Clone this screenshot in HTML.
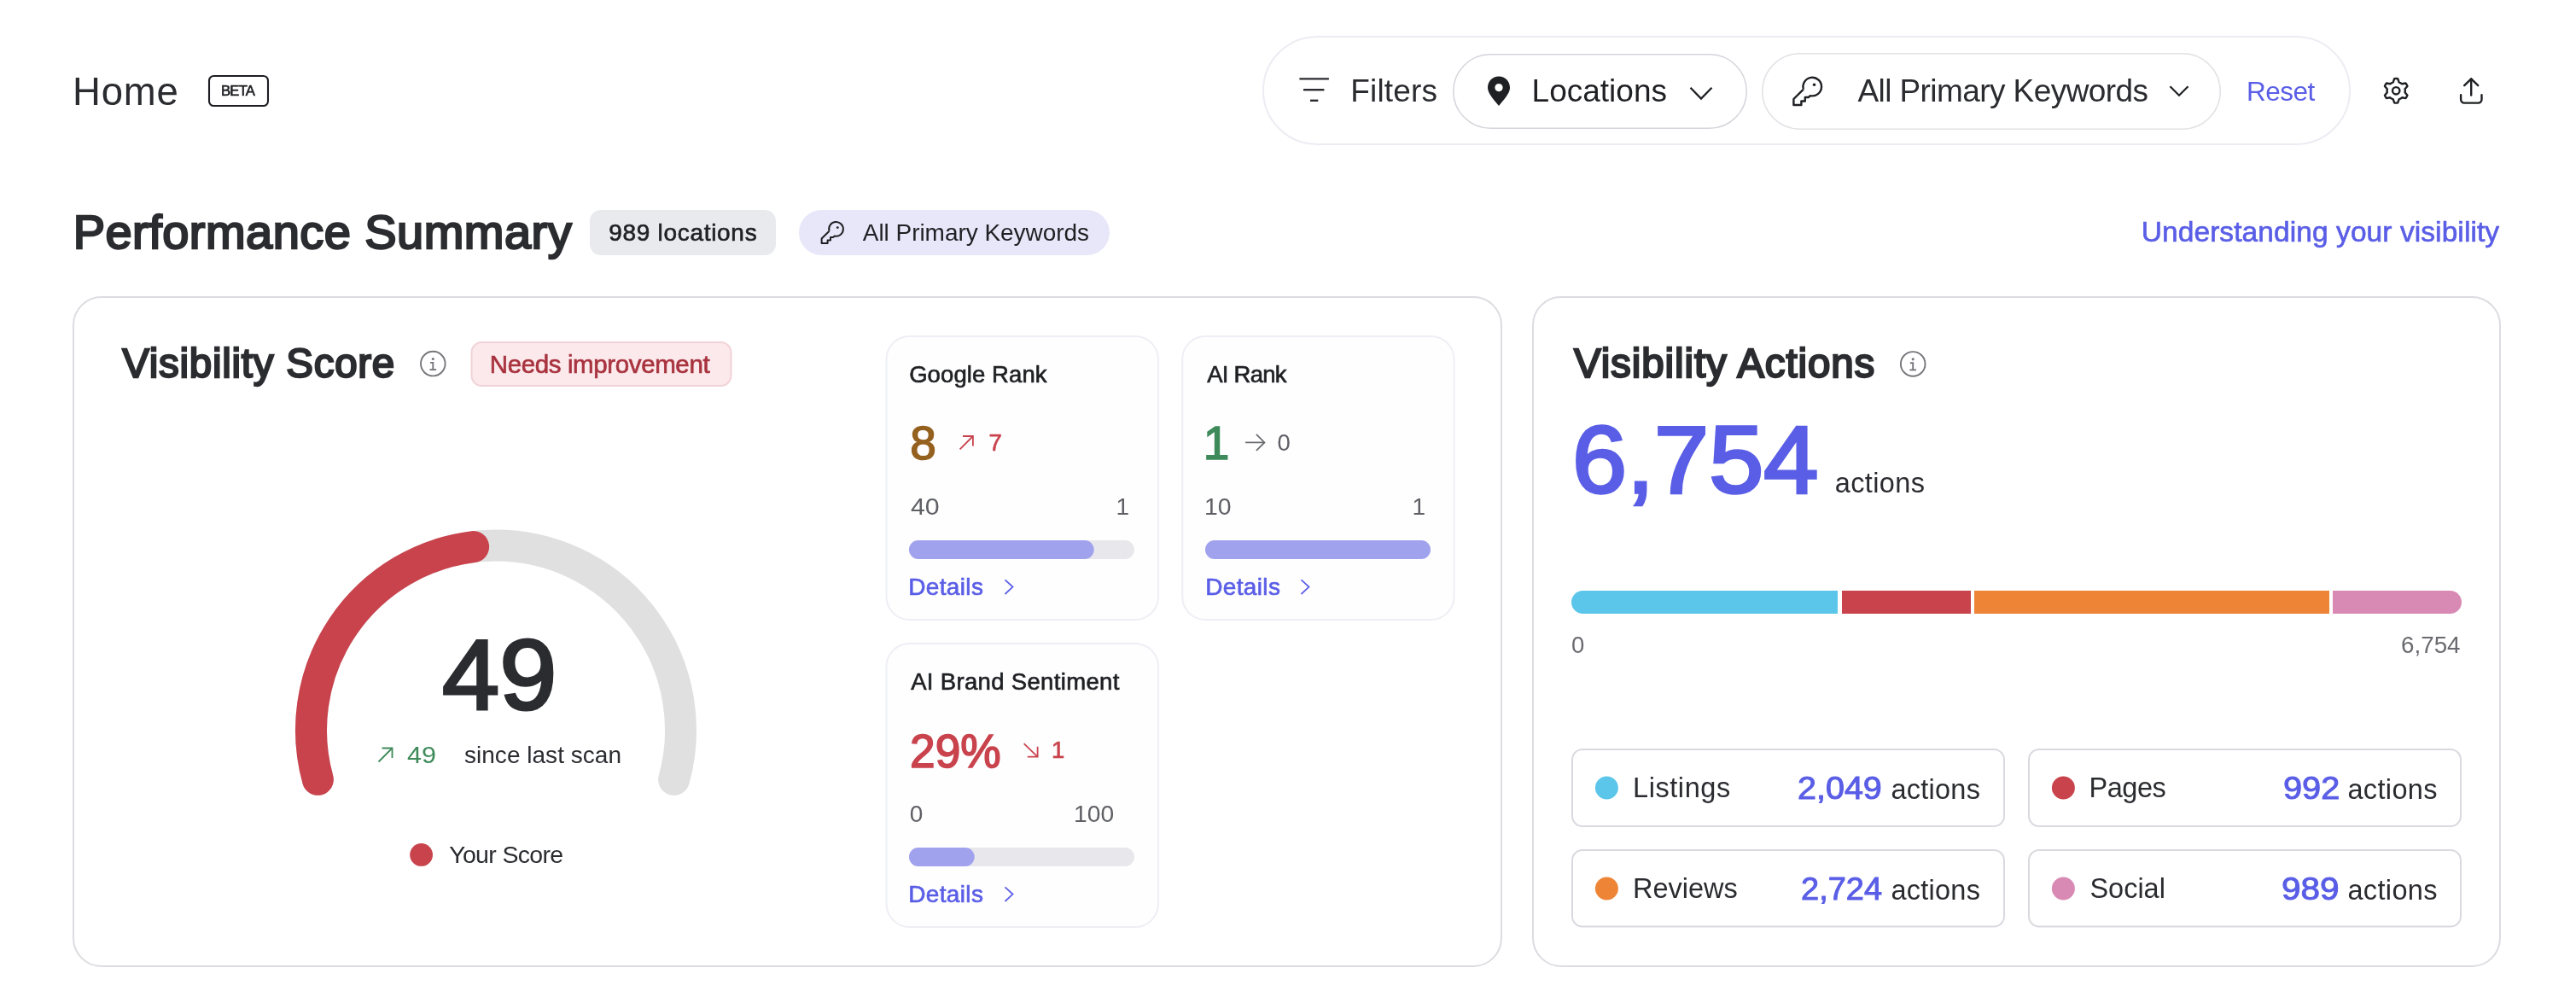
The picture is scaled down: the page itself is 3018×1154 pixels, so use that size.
<!DOCTYPE html>
<html><head><meta charset="utf-8"><title>Home</title>
<style>
html,body{margin:0;padding:0;background:#fff;}
body{width:3018px;height:1154px;position:relative;overflow:hidden;font-family:"Liberation Sans",sans-serif;}
svg{position:absolute;left:0;top:0;}
#root{position:absolute;left:0;top:0;width:3018px;height:1154px;}
.t{position:absolute;white-space:nowrap;line-height:1;transform-origin:0 0;}
#tx{position:absolute;left:0;top:0;width:3018px;height:1154px;will-change:transform;}
</style></head><body>
<div id="root">
<svg width="3018" height="1154" viewBox="0 0 3018 1154">
<rect x="1480" y="43" width="1273" height="126" rx="63" fill="none" stroke="#ececf3" stroke-width="2"/>
<rect x="1702.75" y="63.75" width="343.5" height="86.5" rx="43.25" fill="#fff" stroke="#d4d5da" stroke-width="1.5"/>
<rect x="2064.75" y="62.75" width="536.5" height="88.5" rx="44.25" fill="#fff" stroke="#e2e2e6" stroke-width="1.5"/>
<rect x="245" y="89" width="69" height="35" rx="5.5" fill="none" stroke="#1d1e21" stroke-width="2.1"/>
<g stroke="#2b2c30" stroke-width="2.4" stroke-linecap="butt"><line x1="1522.4" y1="92.4" x2="1556.9" y2="92.4"/><line x1="1527" y1="105.2" x2="1551.4" y2="105.2"/><line x1="1535" y1="117.8" x2="1544.3" y2="117.8"/></g>
<path d="M1756,89.5 C1748.5,89.5 1743,95.2 1743,102.6 C1743,108 1746.5,113 1756,124 C1765.5,113 1769,108 1769,102.6 C1769,95.2 1763.5,89.5 1756,89.5 Z M1756,98 a4.6,4.6 0 1,0 0.01,0 Z" fill="#1f2023" fill-rule="evenodd"/>
<polyline points="1980.5,102.8 1993,115.6 2005.5,102.8" fill="none" stroke="#1f2023" stroke-width="2.3"/>
<polyline points="2542.5,101.2 2553,111.7 2563.5,101.2" fill="none" stroke="#1f2023" stroke-width="2.2"/>
<path d="M2112.90,104.60 L2101.40,116.00 L2101.40,123.00 L2110.40,123.00 L2110.40,118.50 L2114.80,118.50 L2114.80,114.00 L2118.70,114.00 L2121.00,112.10 A10.80,10.80 0 1,0 2112.90,104.60" fill="none" stroke="#1f2023" stroke-width="2.4" stroke-linejoin="round"/>
<circle cx="2125.50" cy="99.30" r="1.80" fill="#1f2023"/>
<path d="M2805.21,92.14 A14.3,14.3 0 0 1 2809.19,92.14 L2810.65,96.28 A10.6,10.6 0 0 1 2814.15,98.30 L2818.47,97.50 A14.3,14.3 0 0 1 2820.46,100.94 L2817.61,104.28 A10.6,10.6 0 0 1 2817.61,108.32 L2820.46,111.66 A14.3,14.3 0 0 1 2818.47,115.10 L2814.15,114.30 A10.6,10.6 0 0 1 2810.65,116.32 L2809.19,120.46 A14.3,14.3 0 0 1 2805.21,120.46 L2803.75,116.32 A10.6,10.6 0 0 1 2800.25,114.30 L2795.93,115.10 A14.3,14.3 0 0 1 2793.94,111.66 L2796.79,108.32 A10.6,10.6 0 0 1 2796.79,104.28 L2793.94,100.94 A14.3,14.3 0 0 1 2795.93,97.50 L2800.25,98.30 A10.6,10.6 0 0 1 2803.75,96.28 Z" fill="none" stroke="#1f2023" stroke-width="2.4" stroke-linejoin="round"/>
<circle cx="2807.2" cy="106.3" r="4.2" fill="none" stroke="#1f2023" stroke-width="2.4"/>
<g fill="none" stroke="#1f2023" stroke-width="2.4" stroke-linecap="round" stroke-linejoin="round"><polyline points="2887.2,100.2 2895.2,92.3 2903.2,100.2"/><line x1="2895.2" y1="92.6" x2="2895.2" y2="111.6"/><path d="M2883.1,111.2 V116.6 a4,4 0 0 0 4,4 H2903.5 a4,4 0 0 0 4,-4 V111.2"/></g>
<rect x="691" y="246" width="218" height="53" rx="13" fill="#e9eaee"/>
<rect x="936" y="246" width="364" height="53" rx="26.5" fill="#e7e7f9"/>
<path d="M971.53,270.70 L962.62,279.54 L962.62,284.96 L969.59,284.96 L969.59,281.47 L973.00,281.47 L973.00,277.99 L976.03,277.99 L977.81,276.51 A8.37,8.37 0 1,0 971.53,270.70" fill="none" stroke="#1f2023" stroke-width="2.0" stroke-linejoin="round"/>
<circle cx="981.30" cy="266.59" r="1.40" fill="#1f2023"/>
<rect x="86" y="348" width="1673" height="784" rx="33" fill="#fff" stroke="#dcdce1" stroke-width="2"/>
<rect x="1796" y="348" width="1133" height="784" rx="33" fill="#fff" stroke="#dcdce1" stroke-width="2"/>
<g fill="none" stroke="#76777b" stroke-width="1.9"><circle cx="507.3" cy="426.1" r="14.3"/><polyline points="504.0,424.90000000000003 507.3,424.90000000000003 507.3,433.1"/><line x1="503.5" y1="433.1" x2="511.1" y2="433.1"/></g><circle cx="507.3" cy="420.5" r="1.6" fill="#76777b"/>
<g fill="none" stroke="#76777b" stroke-width="1.9"><circle cx="2241.2" cy="426.4" r="14.3"/><polyline points="2237.8999999999996,425.2 2241.2,425.2 2241.2,433.4"/><line x1="2237.3999999999996" y1="433.4" x2="2245.0" y2="433.4"/></g><circle cx="2241.2" cy="420.79999999999995" r="1.6" fill="#76777b"/>
<rect x="552.5" y="401" width="304" height="51" rx="12" fill="#fbe9eb" stroke="#f1d3d7" stroke-width="2"/>
<path d="M372.37,913.36 A216.5,216.5 0 1 1 789.63,913.36" fill="none" stroke="#e0e0e0" stroke-width="37" stroke-linecap="round"/>
<path d="M372.37,913.36 A216.5,216.5 0 0 1 554.62,640.61" fill="none" stroke="#c9434d" stroke-width="37" stroke-linecap="round"/>
<g fill="none" stroke="#3e8a5a" stroke-width="1.8"><line x1="443.5" y1="892.5" x2="459.5" y2="876.5"/><polyline points="447.6,876.5 459.5,876.5 459.5,888.1"/></g>
<circle cx="493.6" cy="1001.4" r="13.4" fill="#c9434d"/>
<rect x="1038.5" y="394" width="318.5" height="332" rx="27" fill="#fefeff" stroke="#eeeff4" stroke-width="2"/>
<rect x="1385.2" y="394" width="318.3" height="332" rx="27" fill="#fefeff" stroke="#eeeff4" stroke-width="2"/>
<rect x="1038.5" y="754" width="318.5" height="332" rx="27" fill="#fefeff" stroke="#eeeff4" stroke-width="2"/>
<g fill="none" stroke="#c9434d" stroke-width="1.8"><line x1="1124.6" y1="526.3" x2="1139.9" y2="511"/><polyline points="1128.0,511 1139.9,511 1139.9,522.6"/></g>
<g fill="none" stroke="#68696e" stroke-width="1.7"><line x1="1459.1" y1="518.4" x2="1481.2" y2="518.4"/><polyline points="1471.9,508.9 1481.5,518.4 1471.9,527.9"/></g>
<g fill="none" stroke="#c9434d" stroke-width="1.8"><line x1="1199.6" y1="871.2" x2="1215.6" y2="886.6"/><polyline points="1203.8,886.6 1215.6,886.6 1215.6,874.8"/></g>
<rect x="1065" y="633" width="264" height="22" rx="11.0" fill="#e8e8ec"/>
<rect x="1065" y="633" width="216.7" height="22" rx="11.0" fill="#a0a2ee"/>
<rect x="1412" y="633" width="264" height="22" rx="11.0" fill="#e8e8ec"/>
<rect x="1412" y="633" width="264" height="22" rx="11.0" fill="#a0a2ee"/>
<rect x="1065" y="993" width="264" height="22" rx="11.0" fill="#e8e8ec"/>
<rect x="1065" y="993" width="76.7" height="22" rx="11.0" fill="#a0a2ee"/>
<polyline points="1177.5,679.3 1186.5,687.5999999999999 1177.5,696.0" fill="none" stroke="#5a5ee6" stroke-width="1.8"/>
<polyline points="1524.5,679.3 1533.5,687.5999999999999 1524.5,696.0" fill="none" stroke="#5a5ee6" stroke-width="1.8"/>
<polyline points="1177.5,1039.3 1186.5,1047.6 1177.5,1056.0" fill="none" stroke="#5a5ee6" stroke-width="1.8"/>
<clipPath id="sb"><rect x="1841" y="692" width="1043" height="27" rx="13.5"/></clipPath>
<g clip-path="url(#sb)"><rect x="1841" y="692" width="312" height="27" fill="#5cc6ea"/><rect x="2158" y="692" width="151" height="27" fill="#c9434d"/><rect x="2313" y="692" width="416" height="27" fill="#ee8436"/><rect x="2733" y="692" width="151" height="27" fill="#d98ab4"/></g>
<rect x="1842" y="878" width="506" height="90" rx="12" fill="#fff" stroke="#d9dadf" stroke-width="2"/>
<circle cx="1882.4" cy="923" r="13.5" fill="#5cc6ea"/>
<rect x="2377" y="878" width="506" height="90" rx="12" fill="#fff" stroke="#d9dadf" stroke-width="2"/>
<circle cx="2417.4" cy="923" r="13.5" fill="#c9434d"/>
<rect x="1842" y="996" width="506" height="89.5" rx="12" fill="#fff" stroke="#d9dadf" stroke-width="2"/>
<circle cx="1882.4" cy="1041" r="13.5" fill="#ee8436"/>
<rect x="2377" y="996" width="506" height="89.5" rx="12" fill="#fff" stroke="#d9dadf" stroke-width="2"/>
<circle cx="2417.4" cy="1041" r="13.5" fill="#d98ab4"/>
</svg>
<div id="tx">
<div class="t" id="t0" style="left:85.00px;top:85.01px;font-size:45.5px;color:#2b2c30;letter-spacing:0.838px;">Home</div>
<div class="t" id="t1" style="left:258.93px;top:99.00px;font-size:16.7px;color:#1d1e21;-webkit-text-stroke:0.65px #1d1e21;letter-spacing:-0.756px;">BETA</div>
<div class="t" id="t2" style="left:1582.20px;top:88.00px;font-size:37px;color:#2b2c30;letter-spacing:0.193px;">Filters</div>
<div class="t" id="t3" style="left:1794.60px;top:88.00px;font-size:37px;color:#1f2023;">Locations</div>
<div class="t" id="t4" style="left:2176.40px;top:88.00px;font-size:37px;color:#2b2c30;letter-spacing:-0.574px;">All Primary Keywords</div>
<div class="t" id="t5" style="left:2632.00px;top:92.00px;font-size:31.5px;color:#5a5ee6;letter-spacing:-0.504px;">Reset</div>
<div class="t" id="t6" style="left:85.70px;top:243.90px;font-size:56px;color:#2b2c30;-webkit-text-stroke:2.40px #2b2c30;letter-spacing:0.457px;">Performance Summary</div>
<div class="t" id="t7" style="left:713.33px;top:259.21px;font-size:28px;color:#1f2023;-webkit-text-stroke:0.65px #1f2023;letter-spacing:0.691px;">989 locations</div>
<div class="t" id="t8" style="left:1010.80px;top:259.21px;font-size:28px;color:#1f2023;letter-spacing:-0.042px;">All Primary Keywords</div>
<div class="t" id="t9" style="left:2508.72px;top:255.10px;font-size:33.5px;color:#5a5ee6;-webkit-text-stroke:0.65px #5a5ee6;letter-spacing:0.081px;">Understanding your visibility</div>
<div class="t" id="t10" style="left:143.15px;top:402.41px;font-size:47.5px;color:#2b2c30;-webkit-text-stroke:2.30px #2b2c30;letter-spacing:0.744px;">Visibility Score</div>
<div class="t" id="t11" style="left:573.73px;top:411.60px;font-size:29.5px;color:#a8333f;-webkit-text-stroke:0.65px #a8333f;letter-spacing:-0.380px;">Needs improvement</div>
<div class="t" id="t12" style="left:517.67px;top:733.00px;font-size:116px;color:#2b2c30;-webkit-text-stroke:3.20px #2b2c30;transform:scaleX(1.0413);">49</div>
<div class="t" id="t13" style="left:476.80px;top:870.30px;font-size:28.4px;color:#3e8a5a;transform:scaleX(1.0775);">49</div>
<div class="t" id="t14" style="left:544.00px;top:871.01px;font-size:28px;color:#2b2c30;letter-spacing:0.023px;">since last scan</div>
<div class="t" id="t15" style="left:526.20px;top:987.31px;font-size:28.5px;color:#2b2c30;letter-spacing:-0.659px;">Your Score</div>
<div class="t" id="t16" style="left:1065.13px;top:425.32px;font-size:27.5px;color:#1f2023;-webkit-text-stroke:0.65px #1f2023;letter-spacing:0.095px;">Google Rank</div>
<div class="t" id="t17" style="left:1066.25px;top:491.90px;font-size:55px;color:#95611f;-webkit-text-stroke:1.50px #95611f;">8</div>
<div class="t" id="t18" style="left:1158.52px;top:504.71px;font-size:27.5px;color:#c9434d;-webkit-text-stroke:0.65px #c9434d;">7</div>
<div class="t" id="t19" style="left:1066.80px;top:580.01px;font-size:28px;color:#5f6065;transform:scaleX(1.0825);">40</div>
<div class="t" id="t20" style="left:1307.46px;top:580.01px;font-size:28px;color:#5f6065;">1</div>
<div class="t" id="t21" style="left:1064.13px;top:674.31px;font-size:28px;color:#5a5ee6;-webkit-text-stroke:0.65px #5a5ee6;letter-spacing:0.368px;">Details</div>
<div class="t" id="t22" style="left:1414.13px;top:425.32px;font-size:27.5px;color:#1f2023;-webkit-text-stroke:0.65px #1f2023;letter-spacing:-0.725px;">AI Rank</div>
<div class="t" id="t23" style="left:1409.75px;top:492.01px;font-size:55px;color:#3e8a5a;-webkit-text-stroke:1.50px #3e8a5a;">1</div>
<div class="t" id="t24" style="left:1496.40px;top:504.91px;font-size:27.5px;color:#5f6065;">0</div>
<div class="t" id="t25" style="left:1411.00px;top:580.01px;font-size:28px;color:#5f6065;transform:scaleX(1.0123);">10</div>
<div class="t" id="t26" style="left:1654.46px;top:580.01px;font-size:28px;color:#5f6065;">1</div>
<div class="t" id="t27" style="left:1412.13px;top:674.31px;font-size:28px;color:#5a5ee6;-webkit-text-stroke:0.65px #5a5ee6;letter-spacing:0.368px;">Details</div>
<div class="t" id="t28" style="left:1067.13px;top:785.32px;font-size:27.5px;color:#1f2023;-webkit-text-stroke:0.65px #1f2023;letter-spacing:0.337px;">AI Brand Sentiment</div>
<div class="t" id="t29" style="left:1065.76px;top:852.01px;font-size:56px;color:#c9434d;-webkit-text-stroke:1.60px #c9434d;transform:scaleX(0.9520);">29%</div>
<div class="t" id="t30" style="left:1231.92px;top:864.71px;font-size:27.5px;color:#c9434d;-webkit-text-stroke:0.65px #c9434d;">1</div>
<div class="t" id="t31" style="left:1065.80px;top:940.01px;font-size:28px;color:#5f6065;">0</div>
<div class="t" id="t32" style="left:1257.80px;top:940.01px;font-size:28px;color:#5f6065;transform:scaleX(1.0080);">100</div>
<div class="t" id="t33" style="left:1064.13px;top:1034.31px;font-size:28px;color:#5a5ee6;-webkit-text-stroke:0.65px #5a5ee6;letter-spacing:0.368px;">Details</div>
<div class="t" id="t34" style="left:1843.95px;top:402.11px;font-size:47.5px;color:#2b2c30;-webkit-text-stroke:2.30px #2b2c30;letter-spacing:0.905px;">Visibility Actions</div>
<div class="t" id="t35" style="left:1841.95px;top:482.91px;font-size:112px;color:#5a5ee6;-webkit-text-stroke:3.40px #5a5ee6;transform:scaleX(1.0288);">6,754</div>
<div class="t" id="t36" style="left:2149.80px;top:550.01px;font-size:32.5px;color:#2b2c30;letter-spacing:0.362px;">actions</div>
<div class="t" id="t37" style="left:1841.00px;top:741.82px;font-size:27.5px;color:#6a6b70;">0</div>
<div class="t" id="t38" style="left:2813.40px;top:741.82px;font-size:27.5px;color:#6a6b70;transform:scaleX(1.0106);">6,754</div>
<div class="t" id="t39" style="left:1913.00px;top:906.82px;font-size:32.5px;color:#2b2c30;letter-spacing:0.575px;">Listings</div>
<div class="t" id="t40" style="left:2106.03px;top:904.50px;font-size:37px;color:#5a5ee6;-webkit-text-stroke:1.00px #5a5ee6;transform:scaleX(1.0673);">2,049</div>
<div class="t" id="t41" style="left:2215.40px;top:908.51px;font-size:32.5px;color:#2b2c30;letter-spacing:0.263px;">actions</div>
<div class="t" id="t42" style="left:1913.00px;top:1025.32px;font-size:32.5px;color:#2b2c30;">Reviews</div>
<div class="t" id="t43" style="left:2109.91px;top:1023.00px;font-size:37px;color:#5a5ee6;-webkit-text-stroke:1.00px #5a5ee6;transform:scaleX(1.0266);">2,724</div>
<div class="t" id="t44" style="left:2215.40px;top:1027.01px;font-size:32.5px;color:#2b2c30;letter-spacing:0.263px;">actions</div>
<div class="t" id="t45" style="left:2447.40px;top:906.82px;font-size:32.5px;color:#2b2c30;letter-spacing:-0.434px;">Pages</div>
<div class="t" id="t46" style="left:2674.74px;top:904.50px;font-size:37px;color:#5a5ee6;-webkit-text-stroke:1.00px #5a5ee6;transform:scaleX(1.0733);">992</div>
<div class="t" id="t47" style="left:2750.40px;top:908.51px;font-size:32.5px;color:#2b2c30;letter-spacing:0.363px;">actions</div>
<div class="t" id="t48" style="left:2448.40px;top:1025.32px;font-size:32.5px;color:#2b2c30;">Social</div>
<div class="t" id="t49" style="left:2673.35px;top:1023.00px;font-size:37px;color:#5a5ee6;-webkit-text-stroke:1.00px #5a5ee6;transform:scaleX(1.0945);">989</div>
<div class="t" id="t50" style="left:2750.40px;top:1027.01px;font-size:32.5px;color:#2b2c30;letter-spacing:0.363px;">actions</div>
</div>
</div>
<script>
(function(){var d=window.devicePixelRatio||1,w=window.innerWidth;if(d!==1&&Math.abs(w*d-3018)<4){var r=document.getElementById('root');r.style.transformOrigin='0 0';r.style.transform='scale('+(1/d)+')';}})();
</script>
</body></html>
